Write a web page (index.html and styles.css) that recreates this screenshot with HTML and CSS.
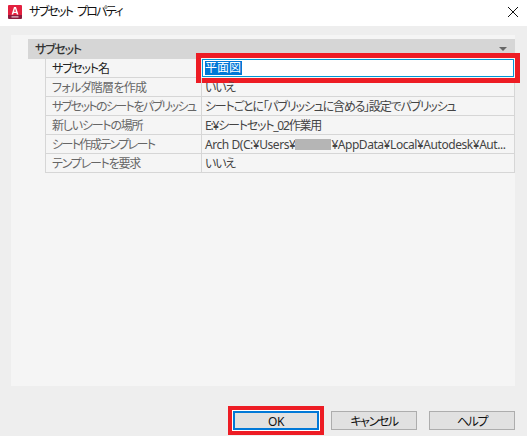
FILE: index.html
```html
<!DOCTYPE html>
<html lang="ja">
<head>
    <meta charset="UTF-8">
    <title>サブセット プロパティ</title>
    <link rel="stylesheet" href="styles.css">
</head>
<body>
    <div class="titlebar">
        <svg class="app-icon" width="14" height="14" viewBox="0 0 14 14">
            <path d="M1 0h12a1 1 0 0 1 1 1v9H0V1a1 1 0 0 1 1-1z" fill="#e3203f"/>
            <path d="M0 10h14v3a1 1 0 0 1-1 1H1a1 1 0 0 1-1-1z" fill="#8c1b3e"/>
            <path d="M3.6 9.5 6 2h2l2.4 7.5H8.8L8.4 8H5.6L5.2 9.500zM6 6.800h2L7 3.600z" fill="#fff"/>
            <rect x="3.500" y="11.300" width="7" height="1.200" fill="#e8c4cf"/>
        </svg>
        <span class="title-text">サブセット プロパティ</span>
        <svg class="close-icon" width="10" height="10" viewBox="0 0 10 10">
            <path d="M0 0 10 10M10 0 0 10" stroke="#111" stroke-width="1" fill="none"/>
        </svg>
    </div>

    <div class="content">
        <div class="panel">
            <div class="group-header">
                <span>サブセット</span>
                <span class="collapse-arrow"></span>
            </div>
            <div class="prop-list">
                <div class="prop-row">
                    <div class="prop-name active">サブセット名</div>
                    <div class="prop-value">
                        <div class="edit-box highlight"><span class="selected-text">平面図</span></div>
                    </div>
                </div>
                <div class="prop-row">
                    <div class="prop-name loose">フォルダ階層を作成</div>
                    <div class="prop-value">いいえ</div>
                </div>
                <div class="prop-row">
                    <div class="prop-name tight">サブセットのシートをパブリッシュ</div>
                    <div class="prop-value">シートごとに「パブリッシュに含める」設定でパブリッシュ</div>
                </div>
                <div class="prop-row">
                    <div class="prop-name">新しいシートの場所</div>
                    <div class="prop-value">E:¥シートセット_02作業用</div>
                </div>
                <div class="prop-row">
                    <div class="prop-name tight">シート作成テンプレート</div>
                    <div class="prop-value path-value">Arch D(C:¥Users¥<span class="redacted"></span>¥AppData¥Local¥Autodesk¥Aut...</div>
                </div>
                <div class="prop-row">
                    <div class="prop-name">テンプレートを要求</div>
                    <div class="prop-value">いいえ</div>
                </div>
            </div>
        </div>
    </div>

    <div class="footer">
        <button class="button ok-btn">OK</button>
        <button class="button">キャンセル</button>
        <button class="button">ヘルプ</button>
    </div>
</body>
</html>
```

FILE: styles.css
```css
* {
    margin: 0;
    padding: 0;
    box-sizing: border-box;
}
body {
    width: 527px;
    height: 436px;
    overflow: hidden;
    background-color: #eeeeee;
    display: flex;
    flex-direction: column;
    font-family: "Noto Sans", "Noto Sans CJK JP", sans-serif;
    font-feature-settings: "palt";
    font-size: 12px;
    letter-spacing: -1.2px;
    color: #333;
}
.titlebar {
    height: 26px;
    background: #fff;
    display: flex;
    align-items: center;
    padding: 0 9px 3px 8px;
}
.app-icon {
    flex: none;
}
.title-text {
    margin: 0 0 2px 7px;
    color: #111;
    letter-spacing: -1.7px;
    word-spacing: 3px;
}
.close-icon {
    margin-left: auto;
}
.content {
    padding: 9px 12px 0 11px;
}
.panel {
    height: 351px;
    background: #f5f5f5;
    padding: 4px 0 0 17px;
}
.group-header {
    height: 20px;
    background: #d6d6d6;
    display: flex;
    align-items: center;
    justify-content: space-between;
    padding: 0 8px 0 7px;
    font-weight: 500;
    color: #333;
}
.collapse-arrow {
    width: 0;
    height: 0;
    border-left: 4px solid transparent;
    border-right: 4px solid transparent;
    border-top: 4px solid #666;
}
.prop-list {
    margin-left: 17px;
    border-left: 1px solid #d6d6d6;
    border-right: 1px solid #d6d6d6;
}
.prop-row {
    height: 19px;
    display: flex;
    border-bottom: 1px solid #d6d6d6;
}
.prop-name {
    width: 156px;
    flex: none;
    padding-left: 6px;
    line-height: 20px;
    color: #666;
    white-space: nowrap;
    border-right: 1px solid #d6d6d6;
}
.prop-name.active {
    color: #222;
}
.prop-name.loose {
    letter-spacing: -0.7px;
}
.prop-name.tight {
    letter-spacing: -1.6px;
}
.prop-value {
    flex: 1;
    min-width: 0;
    padding-left: 3px;
    line-height: 20px;
    color: #444;
    white-space: nowrap;
}
.path-value {
    letter-spacing: -0.45px;
}
.prop-row:first-child .prop-value {
    padding: 0;
}
.edit-box {
    height: 18px;
    background: #fff;
    border: 1px solid #0097d8;
    padding: 1px 0 0 2px;
    line-height: 14px;
}
.selected-text {
    display: block;
    width: 37px;
    height: 14px;
    background: #0078d7;
    color: #fff;
    line-height: 14px;
    letter-spacing: 0;
}
.redacted {
    display: inline-block;
    width: 36px;
    height: 11px;
    background: #b5b5b5;
    vertical-align: -1px;
}
/* 赤枠 */
.highlight {
    box-shadow: 0 0 0 1px #f5f5f5, 0 0 0 6px #ed1c24;
}
.footer {
    display: flex;
    gap: 12px;
    padding: 25px 12px 0 233px;
}
.button {
    width: 86px;
    height: 19px;
    padding-bottom: 2px;
    background: #e1e1e1;
    border: 1px solid #adadad;
    font-family: inherit;
    font-feature-settings: inherit;
    font-size: 12px;
    letter-spacing: -1.4px;
    color: #111;
}
.ok-btn {
    border: 2px solid #0078d7;
    box-shadow: 0 0 0 1px #fff, 0 0 0 5px #ed1c24;
    letter-spacing: -0.5px;
}
```
